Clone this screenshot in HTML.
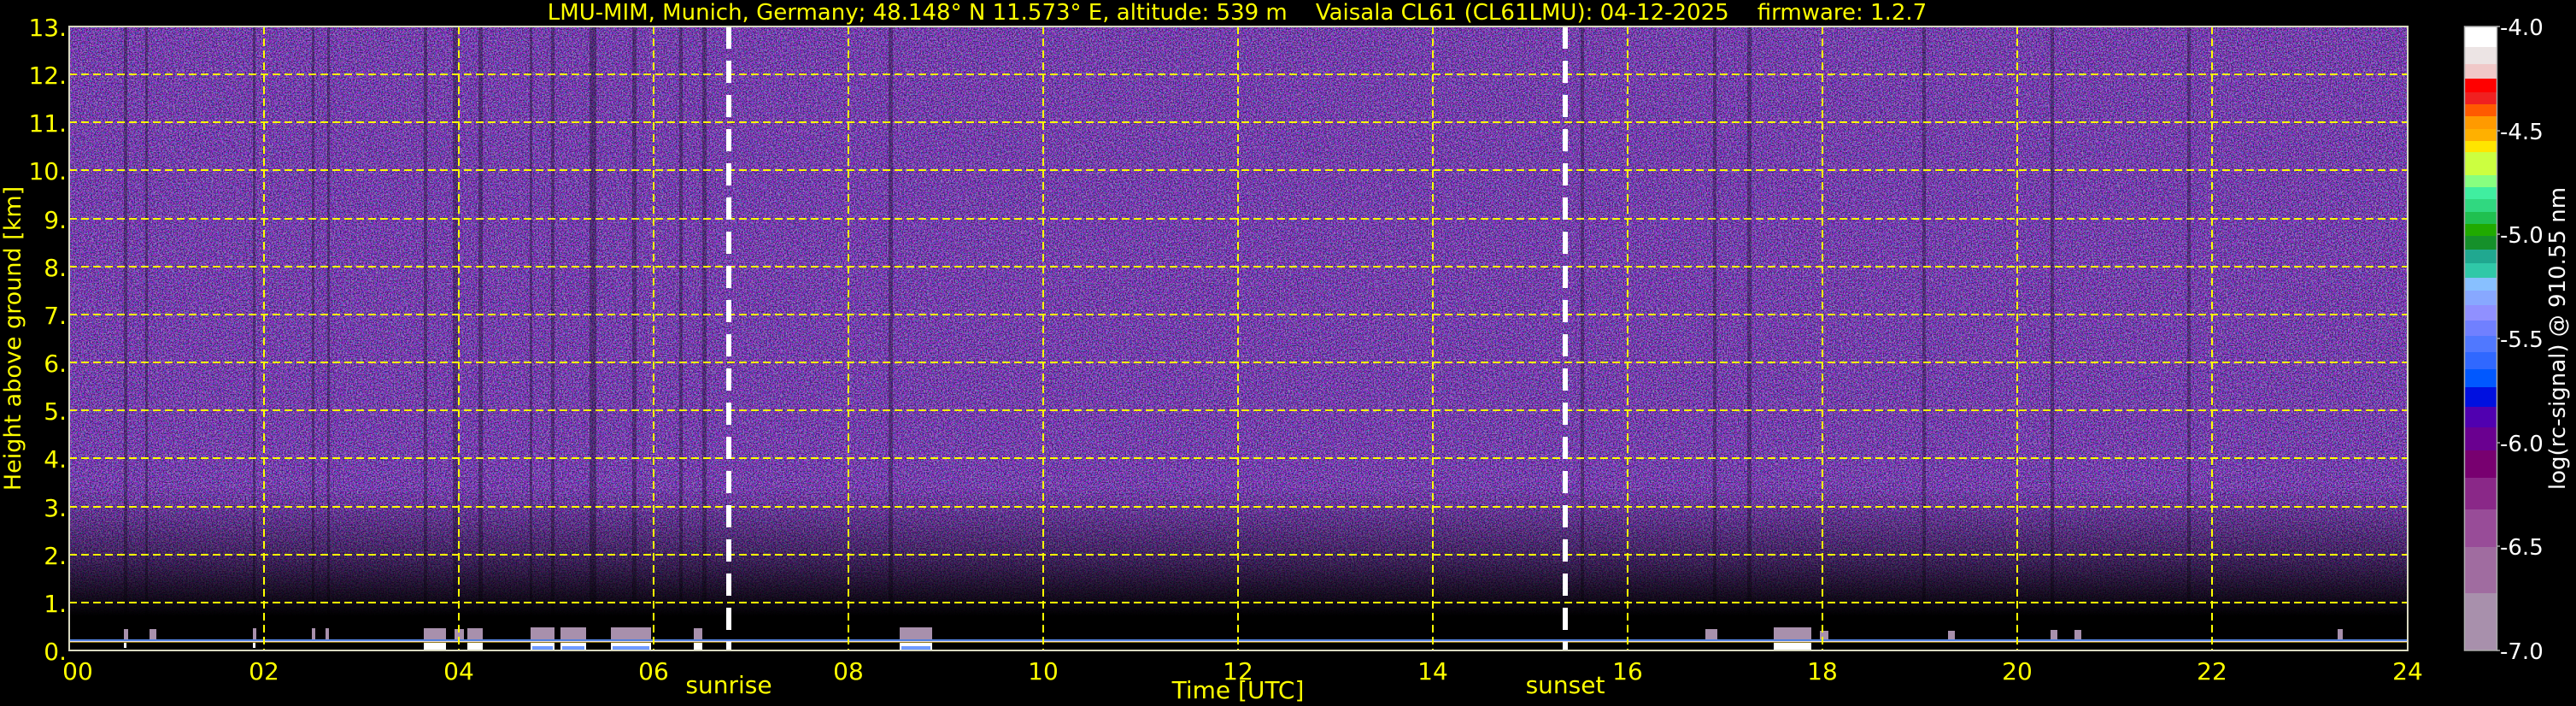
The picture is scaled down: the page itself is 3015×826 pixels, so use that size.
<!DOCTYPE html>
<html><head><meta charset="utf-8"><style>
html,body{margin:0;padding:0;background:#000;width:3015px;height:826px;overflow:hidden}
svg{display:block}
text{font-family:"DejaVu Sans","Liberation Sans",sans-serif}
</style></head><body>
<svg width="3015" height="826" viewBox="0 0 3015 826" xmlns="http://www.w3.org/2000/svg">
<defs>
<filter id="nz" x="0" y="0" width="100%" height="100%">
<feTurbulence type="fractalNoise" baseFrequency="0.6" numOctaves="1" seed="4" result="t"/>
<feColorMatrix in="t" type="matrix" values="
2.0 -0.8 0.2 0 -0.35
0.3 1.6 -1.2 0 -0.25
-0.2 0.4 2.4 0 -0.3
0 0 0 0 1"/>
</filter>
<filter id="bk" x="0" y="0" width="100%" height="100%">
<feTurbulence type="fractalNoise" baseFrequency="0.7" numOctaves="1" seed="11" result="t"/>
<feColorMatrix in="t" type="matrix" values="0 0 0 0 0  0 0 0 0 0  0 0 0 0 0  6 0 0 0 -2.8"/>
</filter>
<linearGradient id="fade" x1="0" y1="0" x2="0" y2="1">
<stop offset="0" stop-color="#fff"/>
<stop offset="0.74" stop-color="#fff"/>
<stop offset="0.84" stop-color="#999"/>
<stop offset="0.91" stop-color="#333"/>
<stop offset="0.945" stop-color="#000"/>
<stop offset="1" stop-color="#000"/>
</linearGradient>
<mask id="m"><rect x="81" y="31" width="2737" height="730" fill="url(#fade)"/></mask>
</defs>
<rect width="3015" height="826" fill="#000"/>
<text x="1448" y="23" fill="#ffff00" font-size="26" text-anchor="middle" xml:space="preserve">LMU-MIM, Munich, Germany; 48.148° N 11.573° E, altitude: 539 m    Vaisala CL61 (CL61LMU): 04-12-2025    firmware: 1.2.7</text>
<g mask="url(#m)">
<rect x="81" y="31" width="2737" height="730" fill="#7c4c9e"/>
<rect x="81" y="31" width="2737" height="730" filter="url(#nz)" opacity="0.5"/>
<rect x="81" y="31" width="2737" height="730" filter="url(#bk)" opacity="0.45"/>
<g fill="#000" opacity="0.3">
<rect x="145" y="31" width="4" height="730"/><rect x="170" y="31" width="3" height="730"/>
<rect x="296" y="31" width="3" height="730"/><rect x="365" y="31" width="3" height="730"/>
<rect x="383" y="31" width="3" height="730"/><rect x="496" y="31" width="4" height="730"/>
<rect x="530" y="31" width="6" height="730"/><rect x="560" y="31" width="5" height="730"/>
<rect x="620" y="31" width="3" height="730"/><rect x="645" y="31" width="4" height="730"/>
<rect x="690" y="31" width="8" height="730"/><rect x="740" y="31" width="5" height="730"/>
<rect x="795" y="31" width="4" height="730"/><rect x="822" y="31" width="5" height="730"/>
<rect x="1040" y="31" width="5" height="730"/><rect x="1850" y="31" width="4" height="730"/>
<rect x="2005" y="31" width="4" height="730"/><rect x="2045" y="31" width="5" height="730"/>
<rect x="2250" y="31" width="4" height="730"/><rect x="2400" y="31" width="4" height="730"/>
<rect x="2560" y="31" width="4" height="730"/>
</g>
</g>
<!-- low signal -->
<g>
<rect x="81" y="748" width="2737" height="2" fill="#5080e0"/>
<rect x="81" y="750" width="2737" height="1" fill="#f0e0e0"/>
<rect x="81" y="751" width="2737" height="1" fill="#e8c020" opacity="0.6"/>
<g fill="#a890ac">
<rect x="145" y="736" width="5" height="12"/><rect x="175" y="736" width="8" height="12"/>
<rect x="296" y="735" width="4" height="13"/><rect x="365" y="735" width="4" height="13"/>
<rect x="381" y="735" width="4" height="13"/>
<rect x="496" y="735" width="26" height="13"/><rect x="532" y="736" width="11" height="12"/>
<rect x="547" y="735" width="18" height="13"/><rect x="621" y="734" width="28" height="14"/>
<rect x="656" y="734" width="30" height="14"/><rect x="715" y="734" width="47" height="14"/>
<rect x="812" y="735" width="10" height="13"/><rect x="1053" y="734" width="38" height="14"/>
<rect x="1996" y="736" width="14" height="12"/><rect x="2076" y="734" width="44" height="14"/>
<rect x="2130" y="738" width="10" height="10"/><rect x="2280" y="738" width="8" height="10"/>
<rect x="2400" y="737" width="8" height="11"/><rect x="2428" y="737" width="8" height="11"/>
<rect x="2736" y="736" width="6" height="12"/>
</g>
<g fill="#fff">
<rect x="496" y="752" width="26" height="8"/><rect x="547" y="752" width="18" height="8"/>
<rect x="621" y="752" width="28" height="8"/><rect x="656" y="752" width="30" height="8"/>
<rect x="715" y="752" width="47" height="8"/><rect x="812" y="752" width="10" height="8"/>
<rect x="1053" y="752" width="38" height="8"/><rect x="2076" y="752" width="44" height="8"/>
<rect x="145" y="752" width="3" height="6"/><rect x="296" y="752" width="3" height="6"/>
</g>
<g fill="#4a80ff" opacity="0.8">
<rect x="623" y="756" width="24" height="4"/><rect x="658" y="756" width="26" height="4"/>
<rect x="717" y="756" width="43" height="4"/><rect x="1055" y="756" width="34" height="4"/>
</g>
</g>
<!-- grid -->
<g stroke="#ffff00" stroke-width="2" stroke-dasharray="9,5" fill="none">
<path d="M81 705H2818M81 649H2818M81 593H2818M81 536H2818M81 480H2818M81 424H2818M81 368H2818M81 312H2818M81 256H2818M81 199H2818M81 143H2818M81 87H2818"/>
<path d="M309 31V761M537 31V761M765 31V761M993 31V761M1221 31V761M1449 31V761M1677 31V761M1905 31V761M2133 31V761M2361 31V761M2589 31V761"/>
</g>
<g stroke="#fff" stroke-width="6" stroke-dasharray="26,14" fill="none">
<path d="M853 31V761M1832 31V761"/>
</g>
<rect x="81" y="31" width="2737" height="730" fill="none" stroke="#d8d8c0" stroke-width="2"/>
<!-- y labels -->
<g fill="#ffff00" font-size="28" text-anchor="end">
<text x="78" y="42">13.</text><text x="78" y="98">12.</text><text x="78" y="154">11.</text>
<text x="78" y="210">10.</text><text x="78" y="267">9.</text><text x="78" y="323">8.</text>
<text x="78" y="379">7.</text><text x="78" y="435">6.</text><text x="78" y="491">5.</text>
<text x="78" y="547">4.</text><text x="78" y="604">3.</text><text x="78" y="660">2.</text>
<text x="78" y="716">1.</text><text x="78" y="772">0.</text>
</g>
<text transform="translate(24,396) rotate(-90)" fill="#ffff00" font-size="27" text-anchor="middle">Height above ground [km]</text>
<g fill="#ffff00" font-size="28" text-anchor="middle">
<text x="91" y="795">00</text><text x="309" y="795">02</text><text x="537" y="795">04</text>
<text x="765" y="795">06</text><text x="993" y="795">08</text><text x="1221" y="795">10</text>
<text x="1449" y="795">12</text><text x="1677" y="795">14</text><text x="1905" y="795">16</text>
<text x="2133" y="795">18</text><text x="2361" y="795">20</text><text x="2589" y="795">22</text>
<text x="2818" y="795">24</text>
<text x="853" y="811">sunrise</text><text x="1832" y="811">sunset</text>
<text x="1449" y="817">Time [UTC]</text>
</g>
<!-- colorbar -->
<g>
<rect x="2885" y="31" width="37" height="24" fill="#ffffff"/>
<rect x="2885" y="55" width="37" height="20" fill="#ece4e4"/>
<rect x="2885" y="75" width="37" height="17" fill="#f0c8c8"/>
<rect x="2885" y="92" width="37" height="16" fill="#ff0000"/>
<rect x="2885" y="108" width="37" height="14" fill="#f02020"/>
<rect x="2885" y="122" width="37" height="14" fill="#ff5a00"/>
<rect x="2885" y="136" width="37" height="15" fill="#ff9a00"/>
<rect x="2885" y="151" width="37" height="14" fill="#ffb000"/>
<rect x="2885" y="165" width="37" height="13" fill="#ffe500"/>
<rect x="2885" y="178" width="37" height="27" fill="#ccff40"/>
<rect x="2885" y="205" width="37" height="14" fill="#88ff80"/>
<rect x="2885" y="219" width="37" height="14" fill="#40eea0"/>
<rect x="2885" y="233" width="37" height="15" fill="#30d880"/>
<rect x="2885" y="248" width="37" height="14" fill="#20c050"/>
<rect x="2885" y="262" width="37" height="14" fill="#20aa00"/>
<rect x="2885" y="276" width="37" height="16" fill="#15902a"/>
<rect x="2885" y="292" width="37" height="16" fill="#20a890"/>
<rect x="2885" y="308" width="37" height="17" fill="#30c8a8"/>
<rect x="2885" y="325" width="37" height="15" fill="#88c0ff"/>
<rect x="2885" y="340" width="37" height="17" fill="#88a8ff"/>
<rect x="2885" y="357" width="37" height="18" fill="#9090ff"/>
<rect x="2885" y="375" width="37" height="18" fill="#7080ff"/>
<rect x="2885" y="393" width="37" height="19" fill="#5078ff"/>
<rect x="2885" y="412" width="37" height="20" fill="#3068ff"/>
<rect x="2885" y="432" width="37" height="21" fill="#0058ff"/>
<rect x="2885" y="453" width="37" height="23" fill="#0010e0"/>
<rect x="2885" y="476" width="37" height="24" fill="#5000b0"/>
<rect x="2885" y="500" width="37" height="27" fill="#6a0090"/>
<rect x="2885" y="527" width="37" height="32" fill="#780070"/>
<rect x="2885" y="559" width="37" height="37" fill="#8a2888"/>
<rect x="2885" y="596" width="37" height="44" fill="#984c98"/>
<rect x="2885" y="640" width="37" height="54" fill="#a06ca0"/>
<rect x="2885" y="694" width="37" height="67" fill="#a890ac"/>
<rect x="2884.5" y="31" width="38" height="730" fill="none" stroke="#aaa" stroke-width="1.5"/>
</g>
<g fill="#fff" font-size="26">
<text x="2926" y="41">-4.0</text><text x="2926" y="163">-4.5</text>
<text x="2926" y="284">-5.0</text><text x="2926" y="406">-5.5</text>
<text x="2926" y="528">-6.0</text><text x="2926" y="649">-6.5</text>
<text x="2926" y="771">-7.0</text>
</g>
<g stroke="#aaa" stroke-width="1.5"><path d="M2922 31h4M2922 153h4M2922 274h4M2922 396h4M2922 518h4M2922 639h4M2922 761h4"/></g>
<text transform="translate(3002,396) rotate(-90)" fill="#fff" font-size="26" text-anchor="middle">log(rc-signal) @ 910.55 nm</text>
</svg>
</body></html>
